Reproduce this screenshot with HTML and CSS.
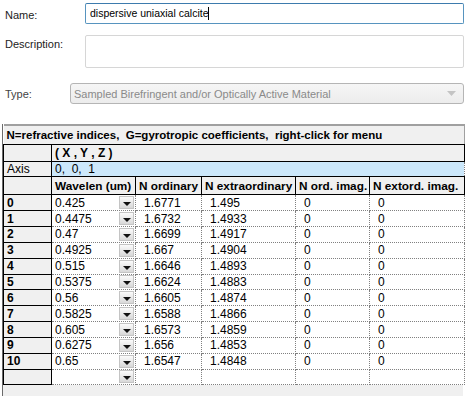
FILE: index.html
```html
<!DOCTYPE html>
<html lang="en">
<head>
  <meta charset="UTF-8" />
  <title>Material Editor</title>
  <link rel="stylesheet" href="styles.css">
</head>
<body>

  <div class="form">
    <div class="field">
      <label>Name:</label>
      <div class="input focused">dispersive uniaxial calcite<span class="caret"></span></div>
    </div>
    <div class="field desc-field">
      <label>Description:</label>
      <div class="input tall"></div>
    </div>
    <div class="field type-field">
      <label>Type:</label>
      <div class="select">
        <span>Sampled Birefringent and/or Optically Active Material</span>
        <svg width="9" height="5" viewBox="0 0 9 5"><path d="M0 0 L9 0 L4.5 5 Z" fill="#c4c4c4"/></svg>
      </div>
    </div>
  </div>

  <div class="grid-panel">
    <table class="grid">
      <colgroup>
        <col style="width:48px">
        <col style="width:84px">
        <col style="width:66px">
        <col style="width:94px">
        <col style="width:74px">
        <col style="width:95px">
      </colgroup>
      <tr class="title-row">
        <td colspan="6">N=refractive indices,&nbsp; G=gyrotropic coefficients,&nbsp; right-click for menu</td>
      </tr>
      <tr class="xyz-row">
        <td class="rh"></td>
        <td colspan="5" class="xyz">( X , Y , Z )</td>
      </tr>
      <tr class="axis-row">
        <td class="rh plain">Axis</td>
        <td colspan="5" class="axis">0,&nbsp; 0,&nbsp; 1</td>
      </tr>
      <tr class="head-row">
        <td class="rh"></td>
        <td>Wavelen (um)</td>
        <td>N ordinary</td>
        <td>N extraordinary</td>
        <td>N ord. imag.</td>
        <td>N extord. imag.</td>
      </tr>
      <tr><td class="rh">0</td><td class="wl">0.425<span class="dd"></span></td><td class="num">1.6771</td><td class="num">1.495</td><td class="num">0</td><td class="num">0</td></tr>
      <tr><td class="rh">1</td><td class="wl">0.4475<span class="dd"></span></td><td class="num">1.6732</td><td class="num">1.4933</td><td class="num">0</td><td class="num">0</td></tr>
      <tr><td class="rh">2</td><td class="wl">0.47<span class="dd"></span></td><td class="num">1.6699</td><td class="num">1.4917</td><td class="num">0</td><td class="num">0</td></tr>
      <tr><td class="rh">3</td><td class="wl">0.4925<span class="dd"></span></td><td class="num">1.667</td><td class="num">1.4904</td><td class="num">0</td><td class="num">0</td></tr>
      <tr><td class="rh">4</td><td class="wl">0.515<span class="dd"></span></td><td class="num">1.6646</td><td class="num">1.4893</td><td class="num">0</td><td class="num">0</td></tr>
      <tr><td class="rh">5</td><td class="wl">0.5375<span class="dd"></span></td><td class="num">1.6624</td><td class="num">1.4883</td><td class="num">0</td><td class="num">0</td></tr>
      <tr><td class="rh">6</td><td class="wl">0.56<span class="dd"></span></td><td class="num">1.6605</td><td class="num">1.4874</td><td class="num">0</td><td class="num">0</td></tr>
      <tr><td class="rh">7</td><td class="wl">0.5825<span class="dd"></span></td><td class="num">1.6588</td><td class="num">1.4866</td><td class="num">0</td><td class="num">0</td></tr>
      <tr><td class="rh">8</td><td class="wl">0.605<span class="dd"></span></td><td class="num">1.6573</td><td class="num">1.4859</td><td class="num">0</td><td class="num">0</td></tr>
      <tr><td class="rh">9</td><td class="wl">0.6275<span class="dd"></span></td><td class="num">1.656</td><td class="num">1.4853</td><td class="num">0</td><td class="num">0</td></tr>
      <tr><td class="rh">10</td><td class="wl">0.65<span class="dd"></span></td><td class="num">1.6547</td><td class="num">1.4848</td><td class="num">0</td><td class="num">0</td></tr>
      <tr><td class="rh"></td><td class="wl"><span class="dd"></span></td><td class="num"></td><td class="num"></td><td class="num"></td><td class="num"></td></tr>
    </table>
    <div class="grid-footer"></div>
  </div>

</body>
</html>
```

FILE: styles.css
```css
* {
  box-sizing: border-box;
}

body {
  margin: 0;
  background-color: #fff;
  font-family: "Liberation Sans", Arial, sans-serif;
  color: #000;
  width: 472px;
  height: 396px;
  overflow: hidden;
}

/* Formulário de cima */
.form {
  padding: 3px 8px 0 5px;
  font-size: 11px;
}

.field {
  display: flex;
  align-items: flex-start;
  margin-bottom: 11px;
}

.field label {
  width: 80px;
  padding-top: 6px;
  color: #222;
}

.desc-field label {
  padding-top: 3px;
}

.input {
  flex: 1;
  height: 21px;
  border: 1px solid #abadb3;
  border-radius: 2px;
  padding: 3px 4px;
  background: #fff;
  font-size: 10.5px;
}

.input.focused {
  border-color: #5794bf;
  border-top-color: #3d7bad;
}

.caret {
  display: inline-block;
  width: 1px;
  height: 13px;
  background: #000;
  vertical-align: -3px;
}

.input.tall {
  height: 33px;
  border-color: #d6d6d6;
}

.type-field {
  margin-top: 15px;
  margin-bottom: 0;
}

.type-field label {
  width: 65px;
  padding-top: 5px;
  color: #444;
}

.select {
  flex: 1;
  height: 21px;
  display: flex;
  align-items: center;
  justify-content: space-between;
  padding: 0 7px 0 3px;
  border: 1px solid #b5b5b5;
  border-radius: 3px;
  background: linear-gradient(#f6f6f6, #ececec);
  color: #8a8a8a;
}

/* Grade de índices */
.grid-panel {
  margin-top: 20px;
  margin-left: 2px;
  width: 461px;
  border-left: 1px solid #6b6b6b;
}

.grid {
  border-collapse: collapse;
  table-layout: fixed;
  width: 461px;
  font-size: 12px;
  line-height: 14px;
}

.grid td {
  height: 15.85px;
  padding: 0 3px;
  white-space: nowrap;
  overflow: hidden;
  border-right: 1px dotted #808080;
  border-bottom: 1px dotted #808080;
}

.title-row td {
  height: 19px;
  background: #f0f0f0;
  font-weight: bold;
  font-size: 11.5px;
  border-top: 2px solid #a0a0a0;
  border-right: 1px solid #a0a0a0;
  border-bottom: 1px solid #000;
}

.grid td.rh {
  background: #f0f0f0;
  font-weight: bold;
  border: 1px solid #000;
}

.grid td.rh.plain {
  font-weight: normal;
}

.xyz-row td {
  height: 17px;
}

.grid td.xyz {
  background: #f0f0f0;
  font-weight: bold;
  border: 1px solid #000;
}

.grid td.axis {
  background: #cce8fb;
  border: 1px dotted #808080;
}

.head-row td {
  height: 18px;
  background: #f0f0f0;
  font-weight: bold;
  font-size: 11.8px;
  border: 1px solid #000;
}

.grid td.wl {
  position: relative;
  padding-left: 3px;
}

.grid td.num {
  padding-left: 8px;
}

/* botão de lista pequeno */
.dd {
  position: absolute;
  right: 1px;
  bottom: 1px;
  width: 15px;
  height: 13px;
  border: 1px solid #c4c4c4;
  background: linear-gradient(#fbfbfb, #d8d8d8);
}

.dd::after {
  content: "";
  position: absolute;
  left: 3px;
  top: 5px;
  border-left: 4px solid transparent;
  border-right: 4px solid transparent;
  border-top: 4px solid #111;
}

.grid-footer {
  height: 20px;
  background: #f0f0f0;
}
```
